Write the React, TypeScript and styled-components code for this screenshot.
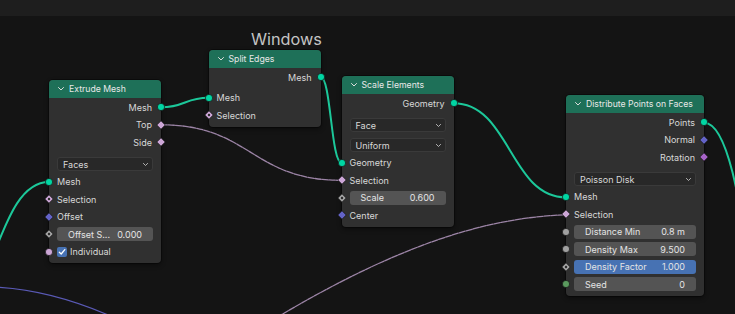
import React from 'react';
import styled, { createGlobalStyle } from 'styled-components';

type Sock = { shape: 'circle' | 'diamond'; color: string; dot?: boolean };

const GEO: Sock = { shape: 'circle', color: '#00d6a3' };
const BOOL: Sock = { shape: 'diamond', color: '#cca6d6' };
const BOOL_DOT: Sock = { shape: 'diamond', color: '#cca6d6', dot: true };
const BOOL_CIRCLE: Sock = { shape: 'circle', color: '#cca6d6' };
const VEC: Sock = { shape: 'diamond', color: '#6363c7' };
const ROT: Sock = { shape: 'diamond', color: '#a663c7' };
const FLOAT: Sock = { shape: 'circle', color: '#a1a1a1' };
const FLOAT_DOT: Sock = { shape: 'diamond', color: '#a1a1a1', dot: true };
const INT: Sock = { shape: 'circle', color: '#5b9a5e' };

type InputRow =
  | { kind: 'socket'; label: string; s: Sock }
  | { kind: 'value'; label: string; value: string; s: Sock; active?: boolean }
  | { kind: 'check'; label: string; s: Sock };

type NodeDef = {
  title: string;
  x: number;
  y: number;
  w: number;
  outputs: { label: string; s: Sock }[];
  props: string[];
  inputs: InputRow[];
};

const nodes: NodeDef[] = [
  {
    title: 'Extrude Mesh',
    x: 49,
    y: 80,
    w: 112,
    outputs: [
      { label: 'Mesh', s: GEO },
      { label: 'Top', s: BOOL },
      { label: 'Side', s: BOOL },
    ],
    props: ['Faces'],
    inputs: [
      { kind: 'socket', label: 'Mesh', s: GEO },
      { kind: 'socket', label: 'Selection', s: BOOL_DOT },
      { kind: 'socket', label: 'Offset', s: VEC },
      { kind: 'value', label: 'Offset S...', value: '0.000', s: FLOAT_DOT },
      { kind: 'check', label: 'Individual', s: BOOL_CIRCLE },
    ],
  },
  {
    title: 'Split Edges',
    x: 208.5,
    y: 50,
    w: 112,
    outputs: [{ label: 'Mesh', s: GEO }],
    props: [],
    inputs: [
      { kind: 'socket', label: 'Mesh', s: GEO },
      { kind: 'socket', label: 'Selection', s: BOOL_DOT },
    ],
  },
  {
    title: 'Scale Elements',
    x: 341.5,
    y: 76,
    w: 112,
    outputs: [{ label: 'Geometry', s: GEO }],
    props: ['Face', 'Uniform'],
    inputs: [
      { kind: 'socket', label: 'Geometry', s: GEO },
      { kind: 'socket', label: 'Selection', s: BOOL },
      { kind: 'value', label: 'Scale', value: '0.600', s: FLOAT_DOT },
      { kind: 'socket', label: 'Center', s: VEC },
    ],
  },
  {
    title: 'Distribute Points on Faces',
    x: 566,
    y: 95,
    w: 138,
    outputs: [
      { label: 'Points', s: GEO },
      { label: 'Normal', s: VEC },
      { label: 'Rotation', s: ROT },
    ],
    props: ['Poisson Disk'],
    inputs: [
      { kind: 'socket', label: 'Mesh', s: GEO },
      { kind: 'socket', label: 'Selection', s: BOOL },
      { kind: 'value', label: 'Distance Min', value: '0.8 m', s: FLOAT },
      { kind: 'value', label: 'Density Max', value: '9.500', s: FLOAT },
      { kind: 'value', label: 'Density Factor', value: '1.000', s: FLOAT_DOT, active: true },
      { kind: 'value', label: 'Seed', value: '0', s: INT },
    ],
  },
];

const GlobalStyle = createGlobalStyle`
  html, body {
    margin: 0;
    padding: 0;
    background: #141414;
  }
  body {
    font-family: Inter, "DejaVu Sans", sans-serif;
  }
`;

const Screen = styled.div`
  width: 735px;
  height: 314px;
  display: flex;
  flex-direction: column;
  overflow: hidden;
  background: #141414;
`;

const TopBar = styled.div`
  height: 16px;
  flex-shrink: 0;
  background: #1e1e1e;
`;

const Canvas = styled.div`
  position: relative;
  flex: 1;
`;

const Links = styled.svg`
  position: absolute;
  left: 0;
  top: 0;
  overflow: visible;
`;

const FrameLabel = styled.div`
  position: absolute;
  left: 251px;
  top: 15px;
  font-size: 16.3px;
  line-height: 17px;
  color: #c4c4c4;
`;

const NodeBox = styled.div<{ $x: number; $y: number; $w: number }>`
  position: absolute;
  left: ${p => p.$x}px;
  top: ${p => p.$y - 16}px;
  width: ${p => p.$w}px;
  display: flex;
  flex-direction: column;
  padding-bottom: 2.5px;
  background: #303030;
  border-radius: 4px;
  box-shadow: 0 0 0 1px rgba(0, 0, 0, 0.35), 0 2px 5px rgba(0, 0, 0, 0.45);
`;

const Header = styled.div`
  height: 17.5px;
  display: flex;
  align-items: center;
  gap: 5px;
  padding-left: 9px;
  background: #1e7058;
  border-radius: 4px 4px 0 0;
  font-size: 8.7px;
  color: #e8e8e8;
  white-space: nowrap;
`;

const Section = styled.div<{ $top: number }>`
  display: flex;
  flex-direction: column;
  padding-top: ${p => p.$top}px;
`;

const Props = styled.div`
  display: flex;
  flex-direction: column;
  gap: 6px;
  padding: 6px 8px 2px;
`;

const Row = styled.div<{ $out?: boolean }>`
  position: relative;
  height: 17.5px;
  display: flex;
  align-items: center;
  justify-content: ${p => (p.$out ? 'flex-end' : 'flex-start')};
  padding: 0 ${p => (p.$out ? 9 : 8)}px;
  font-size: 9px;
  color: #d8d8d8;
  white-space: nowrap;
`;

const SocketSvg = styled.svg<{ $out?: boolean }>`
  position: absolute;
  top: 50%;
  margin-top: -5px;
  ${p => (p.$out ? 'right: -5px;' : 'left: -5px;')}
`;

const Dropdown = styled.div`
  height: 14px;
  display: flex;
  align-items: center;
  justify-content: space-between;
  padding: 0 4px 0 5px;
  box-sizing: border-box;
  background: #282828;
  border: 1px solid #3a3a3a;
  border-radius: 3px;
  font-size: 9px;
  color: #d8d8d8;
`;

const Slider = styled.div<{ $active?: boolean }>`
  flex: 1;
  height: 14px;
  display: flex;
  align-items: center;
  justify-content: space-between;
  padding: 0 11px;
  background: ${p => (p.$active ? '#4772b3' : '#545454')};
  border-radius: 3px;
  color: #e4e4e4;
`;

const Check = styled.div`
  width: 10px;
  height: 10px;
  margin-right: 3px;
  display: flex;
  align-items: center;
  justify-content: center;
  background: #4772b3;
  border-radius: 2px;
`;

const Chevron = ({ w = 6, color = '#e0e0e0' }: { w?: number; color?: string }) => (
  <svg width={w} height={w * 0.6} viewBox="0 0 6 3.6">
    <path d="M0.5 0.5 L3 3 L5.5 0.5" fill="none" stroke={color} strokeWidth="1" strokeLinecap="round" strokeLinejoin="round" />
  </svg>
);

const Socket = ({ s, out }: { s: Sock; out?: boolean }) => (
  <SocketSvg width="10" height="10" viewBox="0 0 10 10" $out={out}>
    {s.shape === 'circle' ? (
      <circle cx="5" cy="5" r="3.6" fill={s.color} stroke="#151515" strokeWidth="0.7" />
    ) : (
      <path d="M5 0.8 L9.2 5 L5 9.2 L0.8 5 Z" fill={s.color} stroke="#151515" strokeWidth="0.7" />
    )}
    {s.dot && <circle cx="5" cy="5" r="1.2" fill="#2a2a2a" />}
  </SocketSvg>
);

const InputLine = ({ row }: { row: InputRow }) => (
  <Row>
    <Socket s={row.s} />
    {row.kind === 'socket' && row.label}
    {row.kind === 'value' && (
      <Slider $active={row.active}>
        <span>{row.label}</span>
        <span>{row.value}</span>
      </Slider>
    )}
    {row.kind === 'check' && (
      <>
        <Check>
          <svg width="8" height="8" viewBox="0 0 8 8">
            <path d="M1.3 4.2 L3.2 6 L6.8 1.6" fill="none" stroke="#fff" strokeWidth="1.3" strokeLinecap="round" strokeLinejoin="round" />
          </svg>
        </Check>
        {row.label}
      </>
    )}
  </Row>
);

const Node = ({ node }: { node: NodeDef }) => (
  <NodeBox $x={node.x} $y={node.y} $w={node.w}>
    <Header>
      <Chevron />
      {node.title}
    </Header>
    <Section $top={1}>
      {node.outputs.map(o => (
        <Row $out key={o.label}>
          {o.label}
          <Socket s={o.s} out />
        </Row>
      ))}
    </Section>
    {node.props.length > 0 && (
      <Props>
        {node.props.map(p => (
          <Dropdown key={p}>
            {p}
            <Chevron w={5} color="#cfcfcf" />
          </Dropdown>
        ))}
      </Props>
    )}
    <Section $top={node.props.length > 0 ? 0 : 3}>
      {node.inputs.map(r => (
        <InputLine row={r} key={r.label} />
      ))}
    </Section>
  </NodeBox>
);

const TEAL = '#1cc89a';
const PINK = '#9c84a6';
const BLUE = '#5a5ab6';

export default function App() {
  return (
    <Screen>
      <GlobalStyle />
      <TopBar />
      <Canvas>
        <Links width="735" height="298">
          <g transform="translate(0 -16)" fill="none" strokeLinecap="round">
            <path d="M-10 287 C30 288, 70 298, 115 318" stroke={BLUE} strokeWidth="1.2" />
            <path d="M240 340 C370 258, 470 218, 566 214.8" stroke={PINK} strokeWidth="1.3" strokeDasharray="6 1.2" />
            <path d="M161 124.8 C251 124.8, 251 180.3, 341.5 180.3" stroke={PINK} strokeWidth="1.3" strokeDasharray="6 1.2" />
            <path d="M-60 320 C-5 320, -5 182, 49 182" stroke={TEAL} strokeWidth="2" />
            <path d="M161 107.3 C185 107.3, 185 97.8, 208.5 97.8" stroke={TEAL} strokeWidth="2" />
            <path d="M320.5 76.8 C331 76.8, 331 162.7, 341.5 162.7" stroke={TEAL} strokeWidth="2" />
            <path d="M453.5 103.3 C510 103.3, 510 197.3, 566 197.3" stroke={TEAL} strokeWidth="2" />
            <path d="M704 122.8 C752 122.8, 752 440, 800 440" stroke={TEAL} strokeWidth="2" />
          </g>
        </Links>
        <FrameLabel>Windows</FrameLabel>
        {nodes.map(n => (
          <Node node={n} key={n.title} />
        ))}
      </Canvas>
    </Screen>
  );
}
